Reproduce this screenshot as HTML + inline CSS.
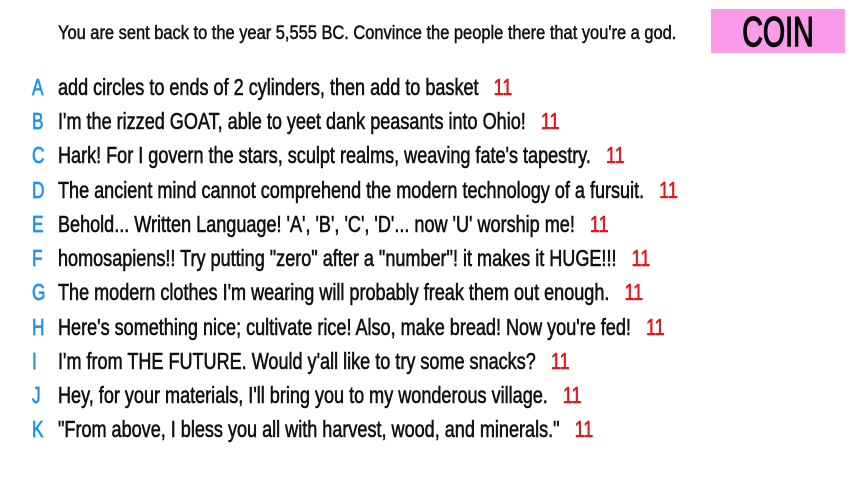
<!DOCTYPE html>
<html><head><meta charset="utf-8"><style>
html,body{margin:0;padding:0;background:#fff;width:853px;height:480px;overflow:hidden;position:relative;font-family:"Liberation Sans",sans-serif;}
.hdr{position:absolute;left:58px;top:23px;font-size:19px;color:#111;white-space:nowrap;transform:scaleX(0.865);transform-origin:left center;-webkit-text-stroke:0.5px #111;}
.coin{position:absolute;left:711px;top:9px;width:134px;height:44px;background:#f99be8;}
.coin span{position:absolute;left:0;right:0;top:1px;text-align:center;font-size:42px;line-height:44px;color:#000;transform:scaleX(0.68);-webkit-text-stroke:1.4px #000;}
.row{position:absolute;left:0;height:30px;width:853px;}
.l{position:absolute;left:32px;top:0;font-size:23px;line-height:30px;color:#1e90ff;transform:scaleX(0.75);transform-origin:left center;-webkit-text-stroke:0.7px #1e90ff;}
.t{position:absolute;left:58px;top:0;font-size:23px;line-height:30px;color:#111;white-space:pre;transform:scaleX(0.785);transform-origin:left center;-webkit-text-stroke:0.6px #111;}
.t b{font-weight:normal;color:#e8141a;-webkit-text-stroke:0.6px #e8141a;}
</style></head><body>
<div class="hdr">You are sent back to the year 5,555 BC. Convince the people there that you're a god.</div>
<div class="coin"><span>COIN</span></div>
<div class="row" style="top:72px"><span class="l">A</span><span class="t">add circles to ends of 2 cylinders, then add to basket   <b>11</b></span></div>
<div class="row" style="top:106px"><span class="l">B</span><span class="t">I'm the rizzed GOAT, able to yeet dank peasants into Ohio!   <b>11</b></span></div>
<div class="row" style="top:140px"><span class="l">C</span><span class="t">Hark! For I govern the stars, sculpt realms, weaving fate's tapestry.   <b>11</b></span></div>
<div class="row" style="top:175px"><span class="l">D</span><span class="t">The ancient mind cannot comprehend the modern technology of a fursuit.   <b>11</b></span></div>
<div class="row" style="top:209px"><span class="l">E</span><span class="t">Behold... Written Language! 'A', 'B', 'C', 'D'... now 'U' worship me!   <b>11</b></span></div>
<div class="row" style="top:243px"><span class="l">F</span><span class="t">homosapiens!! Try putting "zero" after a "number"! it makes it HUGE!!!   <b>11</b></span></div>
<div class="row" style="top:277px"><span class="l">G</span><span class="t">The modern clothes I'm wearing will probably freak them out enough.   <b>11</b></span></div>
<div class="row" style="top:312px"><span class="l">H</span><span class="t">Here's something nice; cultivate rice! Also, make bread! Now you're fed!   <b>11</b></span></div>
<div class="row" style="top:346px"><span class="l">I</span><span class="t">I'm from THE FUTURE. Would y'all like to try some snacks?   <b>11</b></span></div>
<div class="row" style="top:380px"><span class="l">J</span><span class="t">Hey, for your materials, I'll bring you to my wonderous village.   <b>11</b></span></div>
<div class="row" style="top:414px"><span class="l">K</span><span class="t">"From above, I bless you all with harvest, wood, and minerals."   <b>11</b></span></div>
</body></html>
